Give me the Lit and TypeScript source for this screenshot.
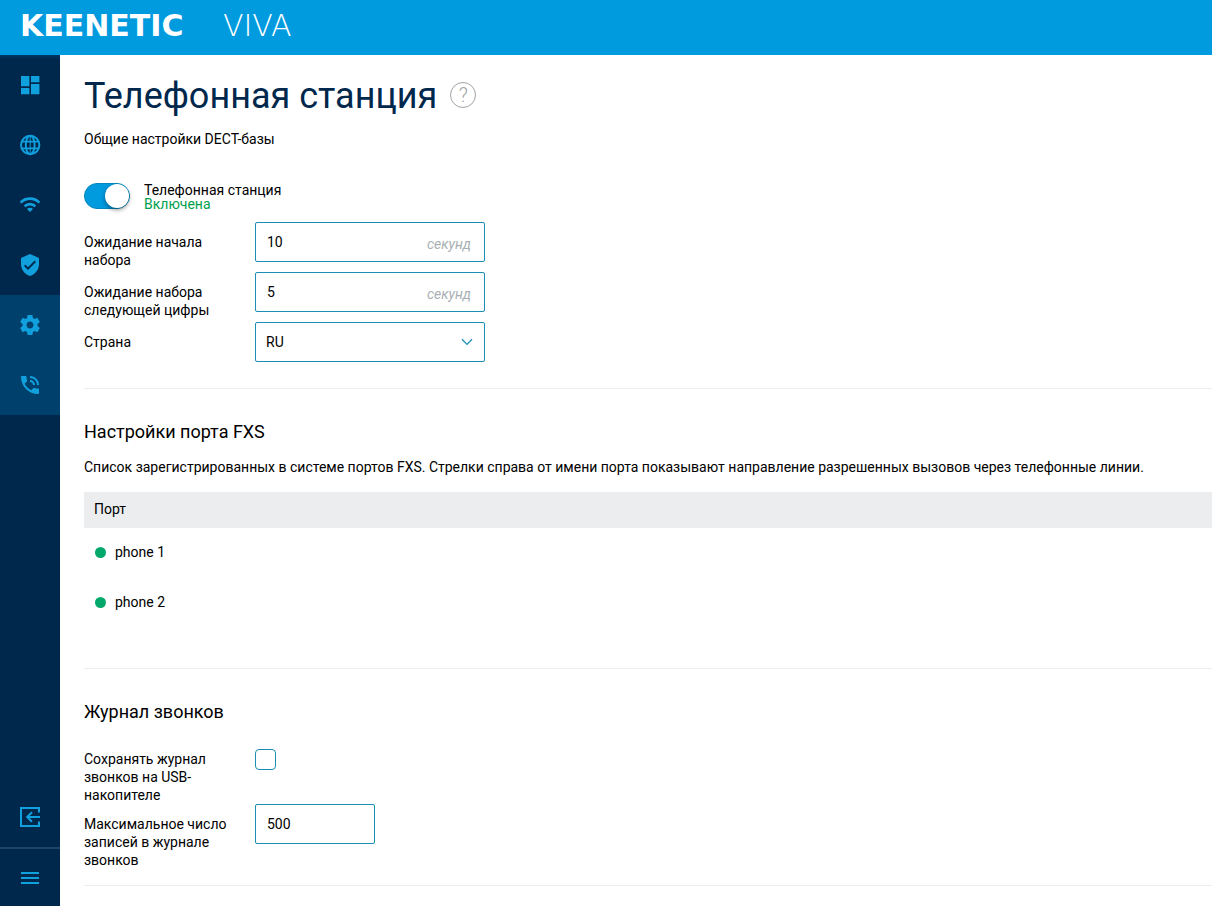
import { LitElement, html, css, svg } from "lit";
import { customElement, state } from "lit/decorators.js";
import { classMap } from "lit/directives/class-map.js";

const icons = {
  dashboard: svg`<path d="M3 3h8.400v10.200H3zM13 3h8.400v6.200H13zM3 15h8.400v6.200H3zM13 11h8.400v10.200H13z" fill="currentColor"/>`,
  globe: svg`<g fill="none" stroke="currentColor" stroke-width="1.900"><circle cx="12.200" cy="12" r="9.200"/><ellipse cx="12.200" cy="12" rx="4.400" ry="9.200"/><path d="M4 8.600h16.400M4 15.400h16.400"/></g><path d="M12.200 3v18" stroke="currentColor" stroke-width="1"/>`,
  wifi: svg`<g fill="none" stroke="currentColor" stroke-width="2.600"><path d="M2.600 9.600a13.200 13.200 0 0 1 18.800 0"/><path d="M6.600 13.400a7.600 7.600 0 0 1 10.800 0"/></g><path d="M9 16a4.200 4.200 0 0 1 6 0l-3 3z" fill="currentColor"/>`,
  shield: svg`<path d="M12 1 3 5v6c0 5.550 3.840 10.740 9 12 5.160-1.260 9-6.450 9-12V5l-9-4zm-2 16-4-4 1.410-1.410L10 14.170l6.590-6.590L18 9l-8 8z" fill="currentColor"/>`,
  gear: svg`<path d="M19.430 12.980c.04-.32.07-.64.07-.98s-.03-.66-.07-.98l2.110-1.650c.19-.15.24-.42.12-.64l-2-3.460c-.12-.22-.39-.3-.61-.22l-2.490 1c-.52-.4-1.080-.73-1.690-.98l-.38-2.650C14.460 2.180 14.250 2 14 2h-4c-.25 0-.46.18-.49.420l-.38 2.650c-.61.25-1.170.59-1.690.98l-2.490-1c-.23-.09-.49 0-.61.22l-2 3.460c-.13.22-.07.49.12.64l2.110 1.650c-.04.32-.07.65-.07.98s.03.66.07.98l-2.110 1.650c-.19.15-.24.42-.12.64l2 3.460c.12.22.39.3.61.22l2.490-1c.52.4 1.080.73 1.690.98l.38 2.650c.03.24.24.42.49.42h4c.25 0 .46-.18.49-.42l.38-2.650c.61-.25 1.170-.59 1.690-.98l2.490 1c.23.09.49 0 .61-.22l2-3.460c.12-.22.07-.49-.12-.64l-2.110-1.650zM12 15.500c-1.930 0-3.500-1.570-3.500-3.500s1.570-3.500 3.500-3.500 3.500 1.570 3.500 3.500-1.570 3.500-3.500 3.500z" fill="currentColor"/>`,
  phone: svg`<path d="M20 15.500c-1.250 0-2.450-.2-3.570-.57-.1-.03-.21-.05-.31-.05-.26 0-.51.1-.71.29l-2.200 2.200c-2.830-1.440-5.150-3.750-6.590-6.590l2.200-2.210c.28-.26.36-.65.25-1C8.700 6.450 8.500 5.250 8.500 4c0-.55-.45-1-1-1H4c-.55 0-1 .45-1 1 0 9.390 7.610 17 17 17 .55 0 1-.45 1-1v-3.500c0-.55-.45-1-1-1zM19 12h2c0-4.970-4.030-9-9-9v2c3.870 0 7 3.130 7 7zm-4 0h2c0-2.760-2.240-5-5-5v2c1.660 0 3 1.340 3 3z" fill="currentColor"/>`,
  exit: svg`<g fill="none" stroke="currentColor" stroke-width="2"><path d="M21 7.600V3H3v18h18v-4.600"/><path d="M22 12H10M14 7.200 9.200 12l4.800 4.800"/></g>`,
  menu: svg`<path d="M3 7h18M3 12h18M3 17h18" fill="none" stroke="currentColor" stroke-width="2"/>`,
};

type IconName = keyof typeof icons;

const navItems: { icon: IconName; label: string; active?: boolean }[] = [
  { icon: "dashboard", label: "Системный монитор" },
  { icon: "globe", label: "Интернет" },
  { icon: "wifi", label: "Мои сети и Wi-Fi" },
  { icon: "shield", label: "Сетевые правила" },
  { icon: "gear", label: "Управление", active: true },
  { icon: "phone", label: "Телефония", active: true },
];

const glyph = (name: IconName) =>
  html`<svg class="icon" viewBox="0 0 24 24" aria-hidden="true">${icons[name]}</svg>`;

@customElement("side-nav")
class SideNav extends LitElement {
  static styles = css`
    :host {
      display: flex;
      flex-direction: column;
      box-sizing: border-box;
      background: linear-gradient(#003767, #00274c 4px);
    }
    .list {
      display: flex;
      flex-direction: column;
      flex: 1;
    }
    .item {
      display: flex;
      align-items: center;
      justify-content: center;
      box-sizing: border-box;
      width: 100%;
      height: 60px;
      padding: 0;
      border: 0;
      background: none;
      color: #10a0dd;
      cursor: pointer;
    }
    .active {
      background: #00406d;
    }
    .menu {
      height: 59px;
      border-top: 2px solid #1f4468;
    }
    .icon {
      width: 24px;
      height: 24px;
    }
  `;

  render() {
    return html`
      <nav class="list">
        ${navItems.map(
          (n) => html`<a class=${classMap({ item: true, active: !!n.active })} href="#" aria-label=${n.label}>${glyph(n.icon)}</a>`
        )}
      </nav>
      <button class="item" aria-label="Выход">${glyph("exit")}</button>
      <button class="item menu" aria-label="Меню">${glyph("menu")}</button>
    `;
  }
}

@customElement("app-root")
class AppRoot extends LitElement {
  @state() private enabled = true;

  static styles = css`
    :host {
      display: grid;
      grid-template: 55px 1fr / 60px minmax(0, 1fr);
      min-height: 100vh;
      background: #fff;
      color: #000;
      font: 14px/18px Roboto, sans-serif;
    }
    .header {
      grid-column: 1 / -1;
      display: flex;
      align-items: center;
      padding: 0 20px 4px;
      background: #009adf;
      color: #fff;
      font: 30px/36px "DejaVu Sans", sans-serif;
    }
    .brand {
      min-width: 203px;
      font-weight: 700;
    }
    .model {
      font-weight: 200;
    }
    .main {
      padding: 19px 0 16px 24px;
    }
    .title {
      display: flex;
      align-items: center;
      gap: 13px;
    }
    h1 {
      margin: 0;
      color: #00274c;
      font-size: 36px;
      line-height: 44px;
      font-weight: 400;
    }
    .help {
      width: 26px;
      height: 26px;
      margin: 0 0 2px;
      padding: 0;
      border: 1px solid #a3a3a3;
      border-radius: 50%;
      background: none;
      color: #a3a3a3;
      font: 300 20px/24px Roboto, sans-serif;
    }
    h2 {
      margin: 0 0 14px;
      font-size: 18px;
      line-height: 24px;
      font-weight: 400;
    }
    p {
      margin: 0;
    }
    .lead {
      margin-top: 12px;
    }
    .power {
      display: flex;
      align-items: center;
      gap: 14px;
      margin: 33px 0 11px;
      line-height: 14px;
    }
    .power-label {
      padding-top: 2px;
    }
    .switch {
      appearance: none;
      display: flex;
      box-sizing: border-box;
      width: 46px;
      height: 26px;
      margin: 0;
      border: 1px solid #0087bd;
      border-radius: 13px;
      background: #009adf;
    }
    .switch::before {
      content: "";
      width: 24px;
      height: 24px;
      border-radius: 50%;
      background: #fff;
      box-shadow: 0 2px 4px rgba(0, 0, 0, 0.4);
    }
    .switch:checked {
      justify-content: flex-end;
    }
    .switch:not(:checked) {
      background: #b0b5b9;
      border-color: #b0b5b9;
    }
    .status {
      display: block;
      color: #009f4d;
    }
    .row {
      display: grid;
      grid-template-columns: 171px minmax(0, 230px);
      align-items: start;
      min-height: 50px;
    }
    .label {
      padding: 11px 20px 0 0;
    }
    .field {
      display: grid;
      align-items: center;
    }
    .field > * {
      grid-area: 1 / 1;
    }
    .control {
      appearance: none;
      box-sizing: border-box;
      width: 100%;
      height: 40px;
      margin: 0;
      padding: 0 11px;
      border: 1px solid #1a8db3;
      border-radius: 2px;
      background: #fff;
      color: #000;
      font: 14px/18px Roboto, sans-serif;
    }
    .select {
      padding: 0 10px;
    }
    .short {
      width: 120px;
    }
    .unit {
      justify-self: end;
      padding: 4px 14px 0 0;
      color: #a8b0b5;
      font-style: italic;
      pointer-events: none;
    }
    .chevron {
      justify-self: end;
      width: 12px;
      height: 8px;
      margin-right: 12px;
      pointer-events: none;
    }
    .section {
      margin-top: 16px;
      padding-top: 31px;
      border-top: 1px solid #ededed;
    }
    .ports {
      width: 100%;
      margin: 16px 0 40px;
      border-collapse: collapse;
      text-align: left;
    }
    .ports th {
      box-sizing: border-box;
      height: 36px;
      padding: 0 10px 2px;
      background: #ecedef;
      font-weight: 400;
    }
    .ports td {
      height: 20px;
      padding: 15px 11px;
      vertical-align: top;
    }
    .port {
      display: flex;
      align-items: center;
      gap: 9px;
    }
    .dot {
      width: 11px;
      height: 11px;
      border-radius: 50%;
      background: #00a96b;
    }
    .log {
      margin-top: 0;
    }
    .log h2 {
      margin-bottom: 15px;
    }
    .check {
      appearance: none;
      box-sizing: border-box;
      width: 21px;
      height: 21px;
      margin: 10px 0 0;
      border: 1px solid #1a8db3;
      border-radius: 4px;
      background: #fff;
    }
    .check:checked {
      background: #009adf;
    }
    .end {
      padding: 0;
    }
  `;

  private toggle(e: Event) {
    this.enabled = (e.target as HTMLInputElement).checked;
  }

  render() {
    return html`
      <header class="header"><span class="brand">KEENETIC</span><span class="model">VIVA</span></header>
      <side-nav></side-nav>
      <main class="main">
        <div class="title">
          <h1>Телефонная станция</h1>
          <button class="help" aria-label="Справка">?</button>
        </div>
        <p class="lead">Общие настройки DECT-базы</p>
        <div class="power">
          <input class="switch" id="power" type="checkbox" role="switch" .checked=${this.enabled} @change=${this.toggle} />
          <label class="power-label" for="power">Телефонная станция<span class="status">${this.enabled ? "Включена" : "Отключена"}</span></label>
        </div>
        <div class="row">
          <label class="label" for="first">Ожидание начала набора</label>
          <div class="field"><input class="control" id="first" value="10" /><span class="unit">секунд</span></div>
        </div>
        <div class="row">
          <label class="label" for="next">Ожидание набора следующей цифры</label>
          <div class="field"><input class="control" id="next" value="5" /><span class="unit">секунд</span></div>
        </div>
        <div class="row">
          <label class="label" for="country">Страна</label>
          <div class="field">
            <select class="control select" id="country"><option>RU</option></select>
            <svg class="chevron" viewBox="0 0 12 8" aria-hidden="true"><path d="M1 1.200 6 6.400l5-5.200" fill="none" stroke="#1a8db3" stroke-width="1.300"/></svg>
          </div>
        </div>
        <section class="section">
          <h2>Настройки порта FXS</h2>
          <p>Список зарегистрированных в системе портов FXS. Стрелки справа от имени порта показывают направление разрешенных вызовов через телефонные линии.</p>
          <table class="ports">
            <thead><tr><th>Порт</th></tr></thead>
            <tbody>
              ${["phone 1", "phone 2"].map((p) => html`<tr><td><div class="port"><span class="dot"></span>${p}</div></td></tr>`)}
            </tbody>
          </table>
        </section>
        <section class="section log">
          <h2>Журнал звонков</h2>
          <div class="row">
            <label class="label" for="save">Сохранять журнал звонков на USB-накопителе</label>
            <input class="check" id="save" type="checkbox" />
          </div>
          <div class="row">
            <label class="label" for="max">Максимальное число записей в журнале звонков</label>
            <input class="control short" id="max" value="500" />
          </div>
        </section>
        <div class="section end"></div>
      </main>
    `;
  }
}
